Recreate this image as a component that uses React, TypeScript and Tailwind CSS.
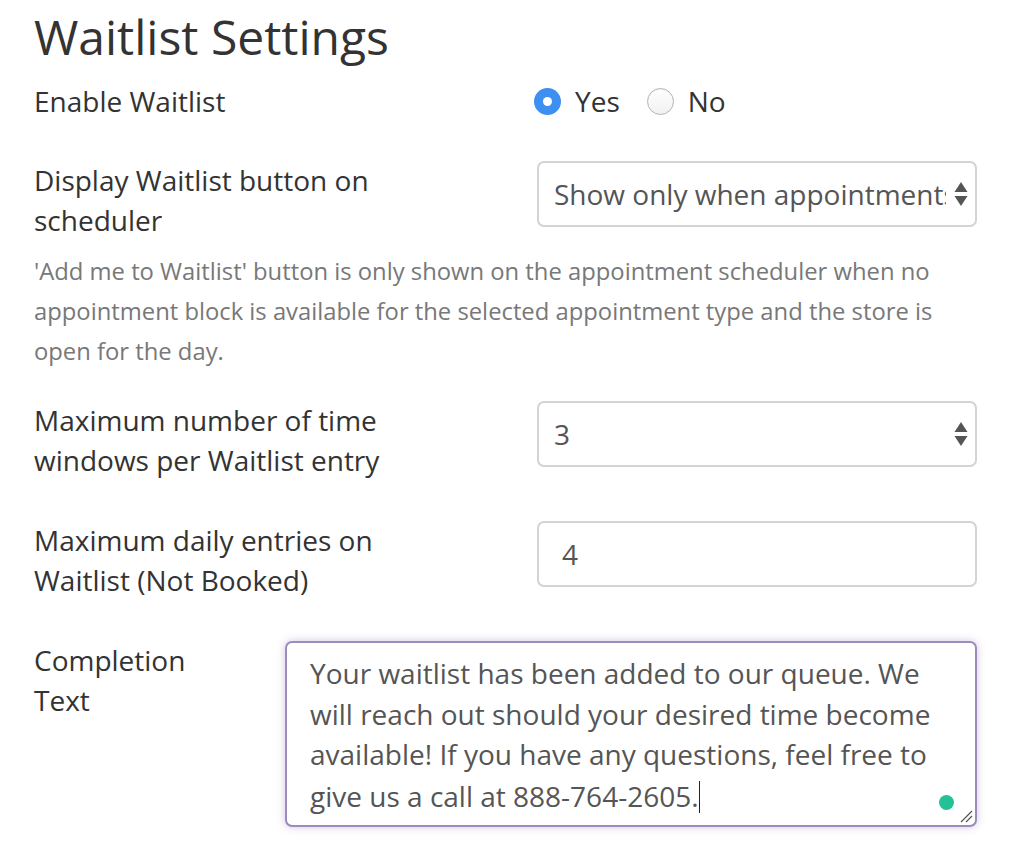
import React from "react";

const Arrows = () => (
  <svg width="14" height="26" viewBox="0 0 14 26" className="ml-[8px] shrink-0">
    <path d="M7 1 L13.5 11 L0.5 11 Z" fill="#555" />
    <path d="M7 25 L13.5 15 L0.5 15 Z" fill="#555" />
  </svg>
);

const Radio = ({ checked, label }: { checked: boolean; label: string }) => (
  <label className="flex items-center gap-[14px]">
    {checked ? (
      <span className="flex h-[27px] w-[27px] items-center justify-center rounded-full bg-[#3d8ff2]">
        <span className="h-[9px] w-[9px] rounded-full bg-white" />
      </span>
    ) : (
      <span className="h-[27px] w-[27px] rounded-full border border-[#b4b4b4] bg-gradient-to-b from-white to-[#f1f1f1] shadow-[inset_0_1px_1px_rgba(0,0,0,0.05)]" />
    )}
    <span className="text-[28px] leading-[40px] text-[#333]">{label}</span>
  </label>
);

export default function App() {
  return (
    <div className="min-h-screen bg-white pl-[34px] pr-[59px] font-['Open_Sans',sans-serif] text-[#333]">
      <h1 className="pt-[4px] text-[48px] leading-[66px] text-[#333]">Waitlist Settings</h1>

      <div className="mt-[11px] grid grid-cols-[503px_minmax(0,1fr)] items-center">
        <div className="text-[28px] leading-[40px]">Enable Waitlist</div>
        <div className="ml-[-3px] flex items-center gap-[27px]">
          <Radio checked label="Yes" />
          <Radio checked={false} label="No" />
        </div>
      </div>

      <div className="mt-[39px] grid grid-cols-[503px_minmax(0,1fr)] items-start">
        <div className="text-[28px] leading-[40px]">
          Display Waitlist button on
          <br />
          scheduler
        </div>
        <div className="mt-[1px] flex h-[66px] min-w-0 items-center rounded-[7px] border-2 border-[#d3d3d3] bg-white pl-[15px] pr-[7px]">
          <span className="min-w-0 flex-1 overflow-hidden whitespace-nowrap text-[28px] text-[#555]">
            Show only when appointments
          </span>
          <Arrows />
        </div>
      </div>

      <p className="mt-[11px] text-[23.8px] leading-[40px] text-[#787878]">
        'Add me to Waitlist' button is only shown on the appointment scheduler when no
        <br />
        appointment block is available for the selected appointment type and the store is
        <br />
        open for the day.
      </p>

      <div className="mt-[29px] grid grid-cols-[503px_minmax(0,1fr)] items-start">
        <div className="text-[28px] leading-[40px]">
          Maximum number of time
          <br />
          windows per Waitlist entry
        </div>
        <div className="mt-[1px] flex h-[66px] items-center justify-between rounded-[7px] border-2 border-[#d3d3d3] bg-white pl-[15px] pr-[7px]">
          <span className="text-[28px] text-[#555]">3</span>
          <Arrows />
        </div>
      </div>

      <div className="mt-[40px] grid grid-cols-[503px_minmax(0,1fr)] items-start">
        <div className="text-[28px] leading-[40px]">
          Maximum daily entries on
          <br />
          Waitlist (Not Booked)
        </div>
        <div className="mt-[1px] flex h-[66px] items-center rounded-[7px] border-2 border-[#d3d3d3] bg-white pl-[23px]">
          <span className="text-[28px] text-[#555]">4</span>
        </div>
      </div>

      <div className="mt-[40px] grid grid-cols-[251px_minmax(0,1fr)] items-start">
        <div className="text-[28px] leading-[40px]">
          Completion
          <br />
          Text
        </div>
        <div className="relative mt-[1px] h-[186px] rounded-[7px] border-2 border-[#9d8bbd] bg-white pl-[23px] pt-[10px] shadow-[0_0_8px_rgba(120,100,170,0.35)]">
          <div className="text-[28px] leading-[40.7px] text-[#555]">
            <div>Your waitlist has been added to our queue. We</div>
            <div>will reach out should your desired time become</div>
            <div>available! If you have any questions, feel free to</div>
            <div>
              give us a call at 888-764-2605.
              <span className="inline-block h-[32px] w-[1.5px] translate-y-[6px] bg-[#222]" />
            </div>
          </div>
          <span className="absolute bottom-[15px] right-[21px] h-[15px] w-[15px] rounded-full bg-[#25c196]" />
          <svg width="14" height="14" viewBox="0 0 14 14" className="absolute bottom-[2px] right-[2px]">
            <path d="M13 2 L2 13 M13 7 L7 13" stroke="#555" strokeWidth="1.2" />
          </svg>
        </div>
      </div>
    </div>
  );
}
